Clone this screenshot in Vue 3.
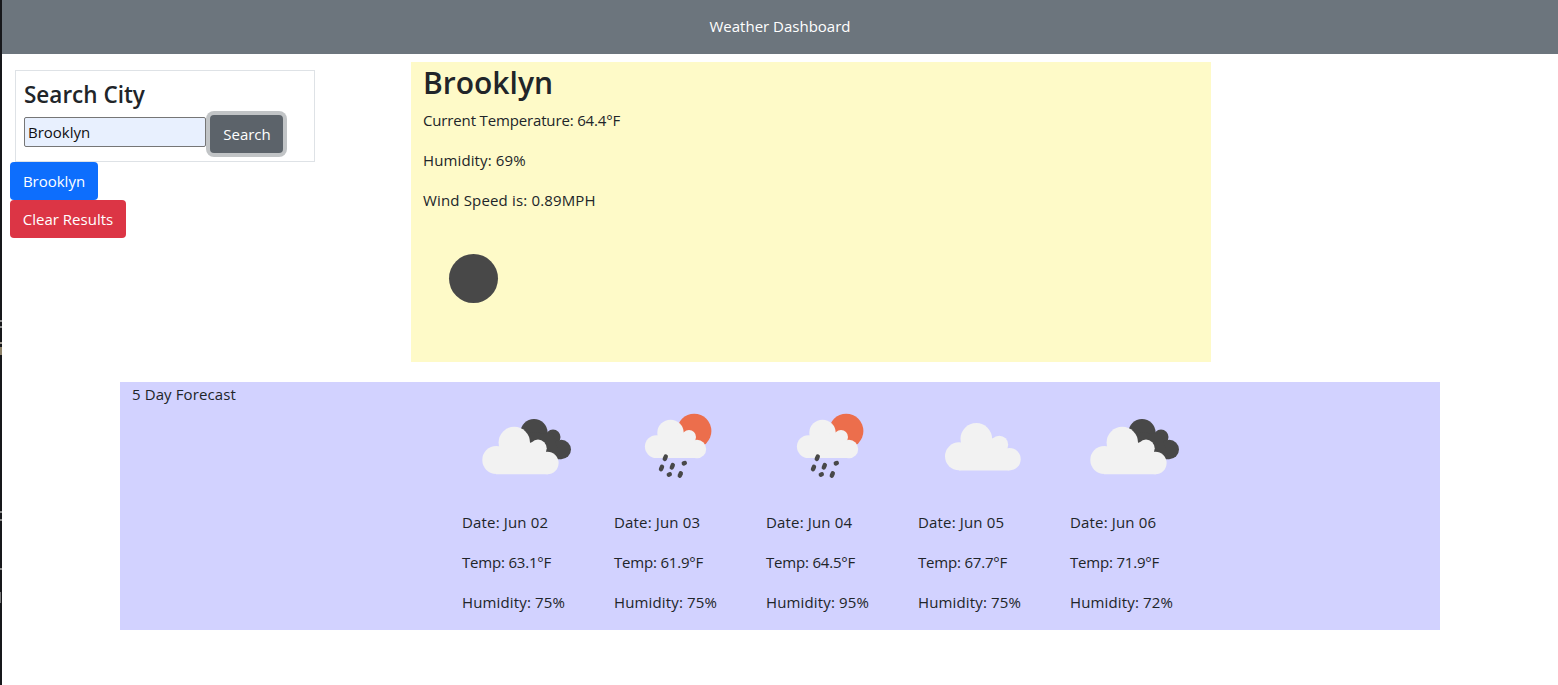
<script setup>
import { ref } from 'vue'

const city = ref('Brooklyn')
const readings = ['Current Temperature: 64.4°F', 'Humidity: 69%', 'Wind Speed is: 0.89MPH']
const days = [
  { date: 'Jun 02', temp: '63.1', humidity: 75, icon: 'broken' },
  { date: 'Jun 03', temp: '61.9', humidity: 75, icon: 'rain' },
  { date: 'Jun 04', temp: '64.5', humidity: 95, icon: 'rain' },
  { date: 'Jun 05', temp: '67.7', humidity: 75, icon: 'cloud' },
  { date: 'Jun 06', temp: '71.9', humidity: 72, icon: 'broken' }
]
const drops = [[51.3, 57.7], [47.5, 68], [58.3, 66.3], [70.3, 63.2], [55.3, 74.5], [66.3, 74.5]]
</script>

<template>
  <div class="page">
    <header class="banner"><span class="heading">Weather Dashboard</span></header>
    <main class="top">
      <aside class="side">
        <section class="search">
          <h4>Search City</h4>
          <div class="row">
            <input v-model="city" type="text" />
            <button class="btn grey">Search</button>
          </div>
        </section>
        <button class="btn blue">Brooklyn</button>
        <button class="btn red">Clear Results</button>
      </aside>
      <section class="current">
        <h2>Brooklyn</h2>
        <p v-for="(r, i) in readings" :key="r" :class="'reading-' + i">{{ r }}</p>
        <svg class="night" width="100" height="100" viewBox="0 0 100 100">
          <circle cx="50.5" cy="50.5" r="24.5" fill="#484848" />
        </svg>
      </section>
    </main>
    <section class="forecast">
      <div class="label">5 Day Forecast</div>
      <div class="days">
        <article v-for="d in days" :key="d.date">
          <svg width="128" height="103" viewBox="0 0 128 103">
            <g v-if="d.icon === 'broken'">
              <g fill="#484848">
                <circle cx="72" cy="32.6" r="13.6" />
                <circle cx="91" cy="37" r="7.5" />
                <circle cx="99.3" cy="49.5" r="9.7" />
                <path d="M65 32L91 34L99 59.2H75Z" />
              </g>
              <g fill="#f2f2f2">
                <circle cx="34.3" cy="60" r="14" />
                <circle cx="52.3" cy="42.5" r="15.7" />
                <circle cx="76" cy="48.3" r="8.7" />
                <circle cx="85.3" cy="63" r="11.3" />
                <path d="M38 46L75 42L86 74.3H34Z" />
              </g>
            </g>
            <g v-else-if="d.icon === 'rain'">
              <circle cx="80.2" cy="31" r="17.2" fill="#ec6e4c" />
              <g fill="#f2f2f2">
                <circle cx="42.3" cy="46.6" r="11.4" />
                <circle cx="56.5" cy="32.9" r="13.2" />
                <circle cx="75" cy="37" r="7" />
                <circle cx="83" cy="49" r="9.2" />
                <path d="M45 35L76 32L83 58.1H42Z" />
              </g>
              <path
                v-for="(p, i) in drops"
                :key="i"
                :d="`M${p[0] + 0.5} ${p[1] - (i === 3 || i === 4 ? 0.2 : 1.2)}L${p[0] - 0.5} ${p[1] + (i === 3 || i === 4 ? 0.2 : 1.2)}`"
                stroke="#484848"
                stroke-width="4.4"
                stroke-linecap="round"
              />
            </g>
            <g v-else fill="#f2f2f2">
              <circle cx="41" cy="56.3" r="14" />
              <circle cx="58.3" cy="38.8" r="15.8" />
              <circle cx="81.2" cy="44.7" r="9" />
              <circle cx="91.5" cy="59.2" r="11.2" />
              <path d="M43 42L81 38L91 70.4H41Z" />
            </g>
          </svg>
          <p class="date">Date: {{ d.date }}</p>
          <p class="temp">Temp: {{ d.temp }}°F</p>
          <p class="humidity">Humidity: {{ d.humidity }}%</p>
        </article>
      </div>
    </section>
  </div>
</template>

<style>
body { margin: 0; background: #fff; }
</style>

<style scoped>
* { box-sizing: border-box; }
.page {
  height: 685px;
  overflow: hidden;
  padding-left: 2px;
  background:
    linear-gradient(#8a8a8a, #8a8a8a) 0 320px / 2px 2px,
    linear-gradient(#8a8a8a, #8a8a8a) 0 326px / 2px 2px,
    linear-gradient(#a09a90, #a09a90) 0 342px / 2px 2px,
    linear-gradient(#8c8168, #8c8168) 0 347px / 2px 8px,
    linear-gradient(#8a8a8a, #8a8a8a) 0 511px / 2px 2px,
    linear-gradient(#8a8a8a, #8a8a8a) 0 519px / 2px 2px,
    linear-gradient(#8a8a8a, #8a8a8a) 0 568px / 2px 2px,
    linear-gradient(#777, #777) 0 592px / 1px 11px,
    linear-gradient(#17181b, #17181b) 0 0 / 2px 685px,
    #fff;
  background-repeat: no-repeat;
  color: #212529;
  font: 15px/24px "Open Sans", "Noto Sans", sans-serif;
}
.banner {
  height: 54px;
  background: #6c757d;
  color: #fff;
  text-align: center;
  line-height: 53px;
}
.top { display: flex; height: 328px; }
.side {
  width: 409px;
  padding: 16px 0 0 8px;
  display: flex;
  flex-direction: column;
  align-items: flex-start;
}
.search {
  width: 300px;
  height: 92px;
  margin-left: 5px;
  padding: 9px 8px;
  border: 1px solid #dee2e6;
}
h4 { margin: 0 0 4px; font-size: 22.5px; line-height: 30px; font-weight: 600; }
.row { display: flex; align-items: flex-start; gap: 4px; }
input {
  width: 182px;
  height: 30px;
  margin-top: 3px;
  padding: 1px 3px;
  border: 1px solid #767676;
  border-radius: 2px;
  background: #e8f0fe;
  color: #111;
  font: inherit;
}
.btn {
  height: 38px;
  padding: 0 13px;
  border: 0;
  border-radius: 4px;
  color: #fff;
  font: inherit;
  white-space: nowrap;
}
.grey { width: 73px; margin-top: 1px; padding: 0 0 0 1px; background: #5c636a; box-shadow: 0 0 0 4px #c1c4c6; }
.blue { width: 88px; padding: 0; background: #0d6efd; }
.red { width: 116px; padding: 0; background: #dc3545; }
.current {
  width: 800px;
  height: 300px;
  margin-top: 8px;
  padding: 0 12px;
  background: #fefac8;
}
h2 { margin: 0 0 5px; padding-top: 1px; font-size: 30px; line-height: 40px; font-weight: 600; }
p { margin: 0 0 16px; }
.reading-0 { letter-spacing: -0.15px; }
.reading-1 { letter-spacing: 0.12px; }
.reading-2 { letter-spacing: 0.16px; }
.date { letter-spacing: 0.16px; }
.temp { letter-spacing: -0.2px; }
.humidity { letter-spacing: 0.15px; }
.night { display: block; }
.forecast {
  width: 1320px;
  height: 248px;
  margin-left: 118px;
  padding: 0 12px;
  background: #d2d2ff;
}
.label { height: 18px; line-height: 25px; letter-spacing: 0.1px; }
.days { display: flex; gap: 24px; margin-left: 330px; }
article { width: 128px; }
article svg { display: block; margin-bottom: 7px; }
</style>
